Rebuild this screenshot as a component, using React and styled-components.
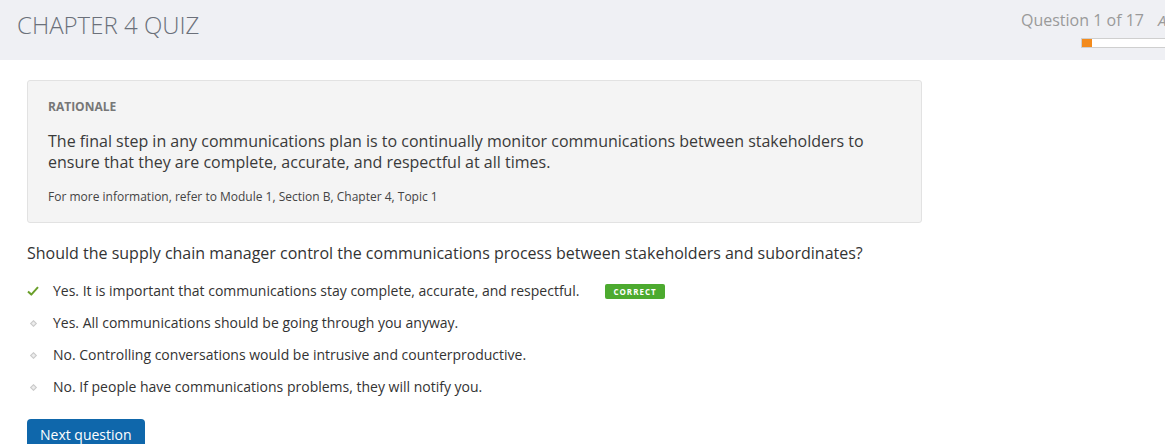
import React from 'react'
import styled, { createGlobalStyle } from 'styled-components'

const GlobalStyle = createGlobalStyle`
  html, body {
    margin: 0;
    padding: 0;
    background: #fff;
    overflow: hidden;
  }
  body {
    font-family: "Open Sans", "DejaVu Sans", sans-serif;
    color: #333;
  }
`

const answers = [
  { text: 'Yes. It is important that communications stay complete, accurate, and respectful.', correct: true },
  { text: 'Yes. All communications should be going through you anyway.' },
  { text: 'No. Controlling conversations would be intrusive and counterproductive.' },
  { text: 'No. If people have communications problems, they will notify you.' },
]

const Check = () => (
  <svg width="12" height="10" viewBox="0 0 12 10">
    <path d="M1 5.5 L4.3 8.6 L11 1.2" fill="none" stroke="#6a9f2a" strokeWidth="2" strokeLinejoin="round" />
  </svg>
)

const App = () => {
  const current = 1
  const total = 17
  return (
    <>
      <GlobalStyle />
      <Header>
        <Title>CHAPTER 4 QUIZ</Title>
        <Progress>
          <Counter>
            Question {current} of {total}
            <Extra>A</Extra>
          </Counter>
          <Bar>
            <Fill style={{ width: `${Math.round((current / total) * 170)}px` }} />
          </Bar>
        </Progress>
      </Header>
      <Main>
        <Rationale>
          <Label>RATIONALE</Label>
          <Explanation>
            The final step in any communications plan is to continually monitor communications between stakeholders to
            ensure that they are complete, accurate, and respectful at all times.
          </Explanation>
          <Reference>For more information, refer to Module 1, Section B, Chapter 4, Topic 1</Reference>
        </Rationale>
        <Question>Should the supply chain manager control the communications process between stakeholders and subordinates?</Question>
        <Answers>
          {answers.map((a) => (
            <Answer key={a.text}>
              <Marker>{a.correct ? <Check /> : <Dot />}</Marker>
              <span>{a.text}</span>
              {a.correct && <Badge>CORRECT</Badge>}
            </Answer>
          ))}
        </Answers>
        <NextButton type='button'>Next question</NextButton>
      </Main>
    </>
  )
}

const Header = styled.header`
  display: flex;
  justify-content: space-between;
  height: 60px;
  background: #eff0f4;
  padding-left: 17px;
`

const Title = styled.h1`
  margin: 0;
  padding-top: 11px;
  font-size: 24px;
  line-height: 1.2;
  font-weight: 300;
  color: #6b707a;
`

const Progress = styled.div`
  flex-shrink: 0;
  width: 200px;
  margin-right: -56px;
  padding-top: 9px;
`

const Counter = styled.div`
  font-size: 16px;
  line-height: 22px;
  color: #9a9a9a;
  white-space: nowrap;
`

const Extra = styled.span`
  margin-left: 14px;
  font-style: italic;
  font-size: 15px;
  color: #9a9a9a;
`

const Bar = styled.div`
  margin: 7px 0 0 60px;
  height: 8px;
  border: 1px solid #cfcfcf;
  background: #fff;
`

const Fill = styled.div`
  height: 100%;
  background: #f38b1d;
`

const Main = styled.main`
  padding: 20px 27px 0;
`

const Rationale = styled.section`
  max-width: 853px;
  padding: 18px 20px 17px;
  background: #f4f4f4;
  border: 1px solid #e2e2e2;
  border-radius: 3px;
`

const Label = styled.div`
  font-size: 12px;
  line-height: 16px;
  font-weight: 700;
  color: #777;
`

const Explanation = styled.p`
  margin: 16px 0 0;
  font-size: 16px;
  line-height: 21px;
  color: #3a3a3a;
`

const Reference = styled.p`
  margin: 16px 0 0;
  font-size: 12px;
  line-height: 16px;
  color: #444;
`

const Question = styled.p`
  margin: 19px 0 0;
  font-size: 16px;
  line-height: 22px;
  color: #333;
`

const Answers = styled.ul`
  list-style: none;
  margin: 11px 0 0;
  padding: 0;
`

const Answer = styled.li`
  display: flex;
  align-items: center;
  padding: 6px 0;
  font-size: 14px;
  line-height: 20px;
  color: #333;
`

const Marker = styled.span`
  display: flex;
  align-items: center;
  justify-content: center;
  width: 12px;
  margin-right: 14px;
`

const Dot = styled.span`
  width: 3px;
  height: 3px;
  border: 1px solid #c9c9c9;
  background: #ececec;
  transform: rotate(45deg);
`

const Badge = styled.span`
  margin-left: 26px;
  padding: 0 8px;
  height: 15px;
  line-height: 15px;
  background: #4caa2f;
  border-radius: 2px;
  color: #fff;
  font-size: 8px;
  font-weight: 700;
  letter-spacing: 1px;
`

const NextButton = styled.button`
  margin-top: 16px;
  padding: 6px 13px 8px;
  background: #0f67ab;
  border: none;
  border-radius: 4px;
  color: #fff;
  font-family: inherit;
  font-size: 14px;
  line-height: 20px;
  cursor: pointer;
`

export default App
